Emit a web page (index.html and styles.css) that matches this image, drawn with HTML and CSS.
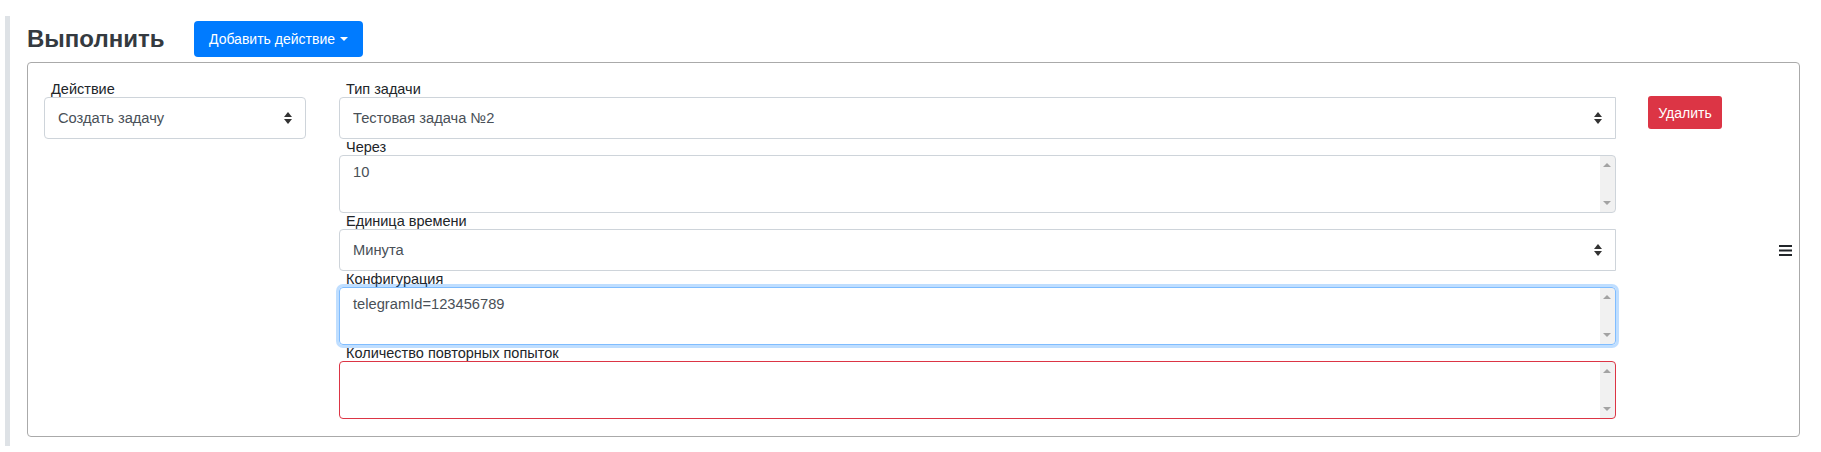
FILE: index.html
```html
<!DOCTYPE html>
<html>
    <head>
        <meta charset="utf-8">
        <title>Выполнить</title>
        <link rel="stylesheet" href="styles.css">
    </head>
<body>
    <div class="section">
        <div class="section-header">
            <h4 class="section-title">Выполнить</h4>
            <button class="btn btn-primary">Добавить действие<span class="caret"></span></button>
        </div>

        <div class="action-card">
            <div class="col-action">
                <label class="field-label">Действие</label>
                <div class="select-wrap">
                    <select class="form-control">
                        <option>Создать задачу</option>
                    </select>
                </div>
            </div>

            <div class="col-fields">
                <label class="field-label">Тип задачи</label>
                <div class="select-wrap">
                    <select class="form-control square-right">
                        <option>Тестовая задача №2</option>
                    </select>
                </div>

                <label class="field-label">Через</label>
                <div class="textarea-wrap">
                    <textarea class="form-control">10</textarea>
                </div>

                <label class="field-label">Единица времени</label>
                <div class="select-wrap">
                    <select class="form-control square-right">
                        <option>Минута</option>
                    </select>
                </div>

                <label class="field-label">Конфигурация</label>
                <div class="textarea-wrap">
                    <textarea class="form-control is-focused" spellcheck="false">telegramId=123456789</textarea>
                </div>

                <label class="field-label">Количество повторных попыток</label>
                <div class="textarea-wrap">
                    <textarea class="form-control is-invalid"></textarea>
                </div>
            </div>

            <div class="col-remove">
                <button class="btn btn-danger">Удалить</button>
            </div>

            <!-- drag handle -->
            <svg class="drag-handle" width="13" height="11" viewBox="0 0 13 11">
                <rect x="0" y="0" width="13" height="2" fill="#212529"/>
                <rect x="0" y="4.5" width="13" height="2" fill="#212529"/>
                <rect x="0" y="9" width="13" height="2" fill="#212529"/>
            </svg>
        </div>
    </div>
</body>
</html>
```

FILE: styles.css
```css
body {
    font-family: "Liberation Sans", Arial, sans-serif;
    margin: 0;
    padding: 0;
    background-color: #fff;
    color: #212529;
}

.section {
    margin: 16px 21px 6px 5px;
    padding: 5px 0 9px 17px;
    border-left: 5px solid #dee2e6;
}

.section-header {
    display: flex;
    align-items: center;
    height: 36px;
    margin-bottom: 5px;
}

.section-title {
    width: 167px;
    margin: 0;
    font-size: 24px;
    font-weight: bold;
    color: #343a40;
}

.btn {
    font-family: inherit;
    font-size: 14px;
    border: none;
    border-radius: 4px;
    color: #fff;
    cursor: pointer;
}

.btn-primary {
    height: 36px;
    width: 169px;
    padding: 0;
    background: #007bff;
}

.caret {
    display: inline-block;
    margin-left: 5px;
    vertical-align: 3px;
    border-top: 4px solid #fff;
    border-left: 4px solid transparent;
    border-right: 4px solid transparent;
}

.btn-danger {
    height: 33px;
    width: 74px;
    padding: 0;
    border-radius: 3px;
    background: #dc3545;
}

.action-card {
    display: flex;
    align-items: flex-start;
    padding: 18px 7px 17px 16px;
    border: 1px solid #aaa;
    border-radius: 4px;
}

.col-action {
    width: 262px;
}

.col-fields {
    width: 1277px;
    margin-left: 33px;
}

.col-remove {
    margin-left: 32px;
    padding-top: 15px;
}

.drag-handle {
    margin-left: auto;
    align-self: center;
    display: block;
}

.field-label {
    display: block;
    padding-left: 7px;
    font-size: 14.5px;
    line-height: 16px;
    color: #212529;
}

.form-control {
    display: block;
    width: 100%;
    box-sizing: border-box;
    margin: 0;
    font-family: inherit;
    font-size: 14.7px;
    color: #495057;
    background: #fff;
    border: 1px solid #ced4da;
    border-radius: 4px;
    outline: none;
}

.select-wrap,
.textarea-wrap {
    position: relative;
}

/* up / down arrows of the select */
.select-wrap::before,
.select-wrap::after {
    content: "";
    position: absolute;
    right: 14px;
    border-left: 4px solid transparent;
    border-right: 4px solid transparent;
    pointer-events: none;
}

.select-wrap::before {
    top: 15px;
    border-bottom: 5px solid #333;
}

.select-wrap::after {
    top: 22px;
    border-top: 5px solid #333;
}

select.form-control {
    height: 42px;
    padding: 0 13px;
    appearance: none;
    -webkit-appearance: none;
}

.square-right {
    border-radius: 4px 0 0 4px;
}

/* the grey strip on the right is the scrollbar track */
textarea.form-control {
    height: 58px;
    padding: 6px 28px 6px 13px;
    line-height: 21px;
    resize: none;
    overflow: hidden;
    background: linear-gradient(to left, #f1f1f1 15px, #fff 15px);
}

/* scrollbar step arrows */
.textarea-wrap::before,
.textarea-wrap::after {
    content: "";
    position: absolute;
    right: 5px;
    border-left: 4px solid transparent;
    border-right: 4px solid transparent;
    pointer-events: none;
}

.textarea-wrap::before {
    top: 8px;
    border-bottom: 4px solid #a3a3a3;
}

.textarea-wrap::after {
    bottom: 8px;
    border-top: 4px solid #a3a3a3;
}

.is-focused {
    border-color: #80bdff;
    box-shadow: 0 0 0 3px rgba(0, 123, 255, 0.25);
}

.is-invalid {
    border-color: #dc3545;
}
```
